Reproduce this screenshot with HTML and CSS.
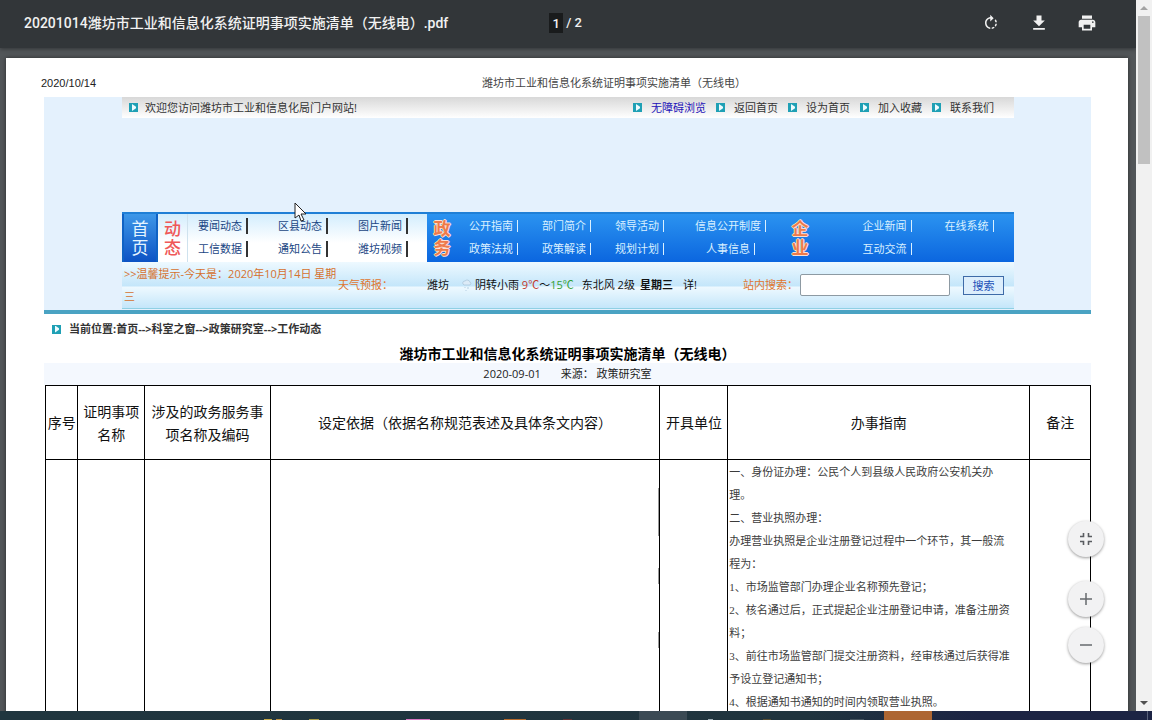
FILE: index.html
```html
<!DOCTYPE html>
<html lang="zh-CN">
<head>
<meta charset="utf-8">
<title>20201014潍坊市工业和信息化系统证明事项实施清单（无线电）.pdf</title>
<link rel="stylesheet" href="styles.css">
</head>
<body>
<div class="viewer">
  <div class="main">
    <header class="toolbar">
      <h1 class="file-name">20201014潍坊市工业和信息化系统证明事项实施清单（无线电）.pdf</h1>
      <div class="pager"><input class="page-input" type="text" value="1" aria-label="页码"><span>/ 2</span></div>
      <div class="tools">
        <button class="tool" type="button" aria-label="顺时针旋转">
          <svg viewBox="0 0 24 24" width="18" height="18"><path fill="currentColor" d="M15.55 5.55 11 1v3.07C7.06 4.56 4 7.92 4 12s3.05 7.44 7 7.93v-2.02c-2.84-.48-5-2.94-5-5.91s2.16-5.43 5-5.91V10l4.55-4.45zM19.93 11c-.17-1.39-.72-2.73-1.62-3.89l-1.42 1.42c.54.75.88 1.6 1.02 2.47h2.02zM13 17.9v2.02c1.39-.17 2.74-.71 3.9-1.61l-1.44-1.44c-.75.54-1.59.89-2.46 1.03zm3.89-2.42 1.42 1.41c.9-1.16 1.45-2.5 1.62-3.89h-2.02c-.14.87-.48 1.72-1.02 2.48z"/></svg>
        </button>
        <button class="tool" type="button" aria-label="下载">
          <svg viewBox="0 0 24 24" width="20" height="20"><path fill="currentColor" d="M19 9h-4V3H9v6H5l7 7 7-7zM5 18v2h14v-2H5z"/></svg>
        </button>
        <button class="tool" type="button" aria-label="打印">
          <svg viewBox="0 0 24 24" width="20" height="20"><path fill="currentColor" d="M19 8H5c-1.66 0-3 1.34-3 3v6h4v4h12v-4h4v-6c0-1.66-1.34-3-3-3zm-3 11H8v-5h8v5zm3-7c-.55 0-1-.45-1-1s.45-1 1-1 1 .45 1 1-.45 1-1 1zm-1-9H6v4h12V3z"/></svg>
        </button>
      </div>
    </header>

    <main class="canvas">
      <article class="sheet">
        <div class="print-head"><time>2020/10/14</time><span class="print-title">潍坊市工业和信息化系统证明事项实施清单（无线电）</span></div>

        <section class="banner">
          <div class="inner">
            <div class="welcome">
              <span class="marked"><i class="mark"></i>欢迎您访问潍坊市工业和信息化局门户网站!</span>
              <nav class="quick">
                <a class="marked blue" href="#"><i class="mark"></i>无障碍浏览</a>
                <a class="marked" href="#"><i class="mark"></i>返回首页</a>
                <a class="marked" href="#"><i class="mark"></i>设为首页</a>
                <a class="marked" href="#"><i class="mark"></i>加入收藏</a>
                <a class="marked" href="#"><i class="mark"></i>联系我们</a>
              </nav>
            </div>

            <nav class="site-nav">
              <a class="group-label home" href="#">首<br>页</a>
              <div class="group news">
                <span class="group-label red">动<br>态</span>
                <div class="links three">
                  <a href="#">要闻动态</a><a href="#">区县动态</a><a href="#">图片新闻</a>
                  <a href="#">工信数据</a><a href="#">通知公告</a><a href="#">潍坊视频</a>
                </div>
              </div>
              <div class="group gov">
                <span class="group-label outlined">政<br>务</span>
                <div class="links four">
                  <a href="#">公开指南</a><a href="#">部门简介</a><a href="#">领导活动</a><a href="#">信息公开制度</a>
                  <a href="#">政策法规</a><a href="#">政策解读</a><a href="#">规划计划</a><a href="#">人事信息</a>
                </div>
              </div>
              <div class="group firm">
                <span class="group-label outlined">企<br>业</span>
                <div class="links two">
                  <a href="#">企业新闻</a><a href="#">在线系统</a>
                  <a href="#">互动交流</a>
                </div>
              </div>
            </nav>

            <div class="tips">
              <p class="today">&gt;&gt;温馨提示-今天是：2020年10月14日 星期<br>三</p>
              <span class="forecast">天气预报：</span>
              <div class="weather">
                <span class="city">潍坊</span>
                <svg class="rain" viewBox="0 0 12 14" width="12" height="14"><path d="M2 6a2 2 0 0 1 2-3 3 3 0 0 1 5 1 2 2 0 0 1 0 3H3zM4 9v1M7 9v2M5 12v1" fill="#dcebf7" stroke="#b5cfe2"/></svg>
                <span>阴转小雨 <b class="low">9℃</b>～<b class="high">15℃</b></span>
                <span class="wind">东北风 2级</span>
                <strong>星期三</strong>
                <span class="detail">详!</span>
              </div>
              <form class="search">
                <label for="q">站内搜索：</label>
                <input id="q" type="text">
                <button type="button">搜索</button>
              </form>
            </div>
          </div>
        </section>

        <div class="crumbs"><i class="mark"></i>当前位置:首页--&gt;科室之窗--&gt;政策研究室--&gt;工作动态</div>
        <h2 class="doc-title">潍坊市工业和信息化系统证明事项实施清单（无线电）</h2>
        <div class="meta"><span>2020-09-01</span><span>来源： 政策研究室</span></div>

        <table class="list">
          <colgroup><col class="c1"><col class="c2"><col class="c3"><col class="c4"><col class="c5"><col class="c6"><col class="c7"></colgroup>
          <thead>
            <tr><th>序号</th><th>证明事项<br>名称</th><th>涉及的政务服务事<br>项名称及编码</th><th>设定依据（依据名称规范表述及具体条文内容）</th><th>开具单位</th><th>办事指南</th><th>备注</th></tr>
          </thead>
          <tbody>
            <tr>
              <td></td><td></td><td></td><td class="basis"></td><td></td>
              <td class="guide">一、身份证办理：公民个人到县级人民政府公安机关办<br>理。<br>二、营业执照办理：<br>办理营业执照是企业注册登记过程中一个环节，其一般流<br>程为：<br>1、市场监管部门办理企业名称预先登记；<br>2、核名通过后，正式提起企业注册登记申请，准备注册资<br>料；<br>3、前往市场监管部门提交注册资料，经审核通过后获得准<br>予设立登记通知书；<br>4、根据通知书通知的时间内领取营业执照。</td>
              <td></td>
            </tr>
          </tbody>
        </table>
      </article>
    </main>
  </div>

  <div class="scrollbar">
    <svg viewBox="0 0 16 16" width="16" height="16"><path d="M4 10h8L8 6z" fill="#a3a3a3"/></svg>
    <div class="thumb"></div>
    <svg class="down" viewBox="0 0 16 16" width="16" height="16"><path d="M4 6h8l-4 4z" fill="#505050"/></svg>
  </div>

  <div class="zoom">
    <button class="fab fit" type="button" aria-label="适合页面大小"><svg viewBox="0 0 18 18" width="18" height="18"><path d="M3 6.500h3.500V3M11.500 3v3.500H15M3 11.500h3.500V15M11.500 15v-3.500H15" fill="none" stroke="#5a5d61" stroke-width="1.600"/></svg></button>
    <button class="fab" type="button" aria-label="放大"><svg viewBox="0 0 18 18" width="18" height="18"><path d="M3 9h12M9 3v12" stroke="#666a6e" stroke-width="1.500"/></svg></button>
    <button class="fab" type="button" aria-label="缩小"><svg viewBox="0 0 18 18" width="18" height="18"><path d="M3 9h12" stroke="#666a6e" stroke-width="1.500"/></svg></button>
  </div>
</div>

<footer class="taskbar">
  <svg viewBox="0 0 1152 9" preserveAspectRatio="none" width="100%" height="9">
    <path d="M639 0h48v9h-48z" fill="#3b4a54"/><path d="M884 0h48v9h-48z" fill="#ad6632"/>
    <path d="M264 8h8v1h-8z" fill="#c5aa49"/><path d="M276 8h6v1h-6z" fill="#b98f43"/><path d="M309 8h10v1h-10z" fill="#aa9d4b"/>
    <path d="M406 8h24v1h-24z" fill="#d676c2"/><path d="M504 8h22v1h-22z" fill="#b66c2e"/><path d="M563 8h9v1h-9z" fill="#643335"/>
    <path d="M708 8h5v1h-5z" fill="#9aabb4"/><path d="M763 8h8v1h-8z" fill="#584e32"/><path d="M850 8h14v1h-14z" fill="#44535f"/>
    <path d="M1147 0h1v9h-1z" fill="#58617a"/>
  </svg>
</footer>

<svg class="cursor" viewBox="0 0 14 20" width="14" height="20"><path d="M1 1v15l4-3 2 6 3-1-3-6h5z" fill="#fff" stroke="#222"/></svg>
</body>
</html>
```

FILE: styles.css
```css
* { box-sizing: border-box; }

body {
  margin: 0;
  height: 100vh;
  display: flex;
  flex-direction: column;
  overflow: hidden;
  background: #525659;
  color: #222;
  font: 11px/18px "Open Sans", "Noto Sans CJK SC", sans-serif;
}

a { color: inherit; text-decoration: none; }
button { font: inherit; cursor: pointer; }
svg { display: block; }

.viewer { position: relative; flex: 1; min-height: 0; display: flex; }
.main { flex: 1; min-width: 0; display: flex; flex-direction: column; }

/* Viewer toolbar */
.toolbar {
  flex: none;
  height: 48px;
  padding: 0 31px 2px 26px;
  display: grid;
  grid-template-columns: 1fr auto 1fr;
  align-items: center;
  background: #323639;
  color: #f1f1f1;
  box-shadow: 0 1px 4px rgba(0, 0, 0, 0.4);
  font-family: Roboto, "Noto Sans CJK SC", sans-serif;
  font-size: 14px;
}
.file-name { margin: 0 0 0 -2px; font-size: 14px; font-weight: 500; white-space: nowrap; }
.pager { display: flex; align-items: center; font-size: 13px; font-weight: 500; }
.page-input {
  width: 14px;
  height: 20px;
  margin-right: 3px;
  padding: 0;
  border: 0;
  background: #191b1c;
  color: inherit;
  font: inherit;
  text-align: center;
}
.tools { display: flex; justify-content: flex-end; gap: 12px; }
.tool {
  width: 36px;
  height: 36px;
  padding: 0;
  border: 0;
  background: none;
  color: #f1f1f1;
  display: grid;
  place-items: center;
}

.canvas { flex: 1; min-height: 0; overflow: hidden; padding: 10px 8px 0 6px; }
.sheet {
  min-height: 100%;
  padding: 16px 37px 0 38px;
  background: #fff;
  box-shadow: 0 0 4px rgba(0, 0, 0, 0.5);
}

.print-head {
  display: grid;
  grid-template-columns: 441fr 609fr;
  margin: 0 0 5px -3px;
  font-family: "Liberation Sans", "Noto Sans CJK SC", sans-serif;
}
.print-title { color: #444; }

/* Site banner */
.banner {
  padding: 0 77px 0 78px;
  background: #e4f1fd;
  border-bottom: 4px solid #4aa3c3;
}
.mark {
  flex: none;
  width: 9px;
  height: 9px;
  padding: 1px 2px 1px 3px;
  background: #1fa0b5;
}
.mark::after {
  content: "";
  display: block;
  height: 7px;
  background: #effcff;
  clip-path: polygon(0 0, 100% 40%, 100% 60%, 0 100%);
}
.welcome {
  height: 21px;
  padding: 0 20px 0 7px;
  display: flex;
  justify-content: space-between;
  align-items: center;
  background: linear-gradient(#d8d8d8, #fff);
  color: #333;
}
.marked { display: flex; align-items: center; gap: 7px; white-space: nowrap; }
.quick { display: flex; gap: 10px; }
.quick .marked { gap: 9px; }
.blue { color: #1d12b8; }

.site-nav {
  height: 50px;
  margin-top: 94px;
  display: grid;
  grid-template-columns: 36fr 269fr 358fr 229fr;
  background: linear-gradient(#2b93f0, #0b66df);
  border-top: 2px solid #1f7fd6;
}
.group { display: flex; min-width: 0; }
.group-label {
  flex: none;
  width: 30px;
  padding-top: 5px;
  font-size: 17px;
  line-height: 19px;
  text-align: center;
}
.home { width: auto; color: #e4f4ff; background: linear-gradient(#3d97e8, #0c52c4); border: solid #0f62c4; border-width: 0 2px; }
.news { background: linear-gradient(#d3edfd, #fff 60%); color: #1a4684; }
.red { color: #ef5858; font-weight: 500; border-right: 1px solid #cfe2ee; }
.outlined {
  color: #ee7a4a;
  font-weight: 700;
  text-shadow: 1px 0 #fbe0d2, -1px 0 #fbe0d2, 0 1px #fbe0d2, 0 -1px #fbe0d2;
}
.links {
  flex: 1;
  display: grid;
  grid-auto-rows: 23px;
  line-height: 23px;
  text-align: center;
  white-space: nowrap;
}
.links a::after {
  content: "";
  display: inline-block;
  width: 1px;
  height: 12px;
  margin-left: 4px;
  background: currentColor;
  vertical-align: -2px;
}
.three { grid-template-columns: 80fr 80fr 69fr; padding-left: 10px; text-align: left; }
.three a::after { width: 2px; height: 16px; background: #333; vertical-align: -4px; }
.four { grid-template-columns: 73fr 73fr 73fr 109fr; color: #d9f0ff; }
.two { grid-template-columns: 82fr 82fr; padding: 0 4px 0 31px; color: #d9f0ff; }

.tips {
  height: 47px;
  padding: 0 10px 0 2px;
  display: grid;
  grid-template-columns: minmax(0, 214fr) minmax(0, 89fr) minmax(0, 316fr) minmax(0, 261fr);
  align-items: center;
  background: linear-gradient(#eef9ff, #c4e6fa 24px, #eef9ff 25px, #c4e6fa);
  border-bottom: 1px solid #8fd0e4;
  white-space: nowrap;
}
.banner .inner { padding-bottom: 1px; }
.today { margin: 0; line-height: 23px; color: #d5712f; }
.forecast, .search label { color: #e0762f; }
.weather { display: flex; align-items: center; color: #111; }
.weather b { font-weight: 400; }
.city { margin-right: 12px; }
.rain { margin-right: 2px; }
.low { color: #c3392b; }
.high { color: #35a035; }
.wind { margin: 0 5px 0 8px; }
.detail { margin-left: 10px; }
.search { display: flex; align-items: center; }
.search label { flex: none; width: 57px; }
.search input { flex: 1; min-width: 0; height: 22px; border: 1px solid #8d9aa3; border-radius: 2px; background: #fff; }
.search button {
  width: 41px;
  height: 19px;
  margin-left: 13px;
  padding: 0;
  border: 1px solid #3e6ba8;
  background: #dceefc;
  color: #1b50b8;
  line-height: 17px;
}

/* Document heading */
.crumbs { height: 30px; padding-left: 8px; display: flex; align-items: center; gap: 8px; font-weight: 700; color: #333; }
.doc-title { margin: 1px 0 0; font-size: 14px; line-height: 18px; text-align: center; color: #000; }
.meta { display: flex; justify-content: center; gap: 20px; line-height: 22px; background: #f4f8fe; }

/* Item list */
.list { width: calc(100% - 1px); margin-left: 1px; border-collapse: collapse; table-layout: fixed; color: #111; }
.list th, .list td { padding: 0; border: 1px solid #000; }
.list th { height: 74px; font-size: 14px; font-weight: 400; line-height: 23px; white-space: nowrap; }
.list td { height: 360px; vertical-align: top; }
.c1 { width: 3.1%; }
.c2 { width: 6.4%; }
.c3 { width: 12%; }
.c4 { width: 37.3%; }
.c5 { width: 6.5%; }
.c6 { width: 28.9%; }
.c7 { width: 5.8%; }
.list .guide {
  padding: 1px 0 0 1px;
  font-family: "Liberation Serif", "Noto Sans CJK SC", serif;
  line-height: 23px;
  color: #3c3c3c;
  white-space: nowrap;
}
.basis {
  background: linear-gradient(transparent 28px, #999 28px 76px, transparent 76px 108px, #999 108px 124px, transparent 124px 172px, #999 172px 188px, transparent 188px) right / 1px 100% no-repeat;
}

/* Scrollbar, zoom buttons, desktop strip */
.scrollbar { flex: none; width: 16px; display: flex; flex-direction: column; background: #f1f1f1; }
.thumb { height: 148px; margin: 0 2px; background: #c1c1c1; }
.down { margin-top: auto; }

.zoom { position: absolute; right: 48px; bottom: 48px; display: flex; flex-direction: column; gap: 10px; }
.fab {
  width: 36px;
  height: 36px;
  padding: 0;
  border: 0;
  border-radius: 50%;
  background: #f2f2f3;
  box-shadow: 0 1px 3px rgba(0, 0, 0, 0.4);
  display: grid;
  place-items: center;
}
.fit { margin-bottom: 14px; }

.taskbar { flex: none; height: 9px; background: linear-gradient(90deg, #20363f, #20343e 70%, #1c2444 85%); }
.cursor { position: absolute; left: 294px; top: 202px; }
```
